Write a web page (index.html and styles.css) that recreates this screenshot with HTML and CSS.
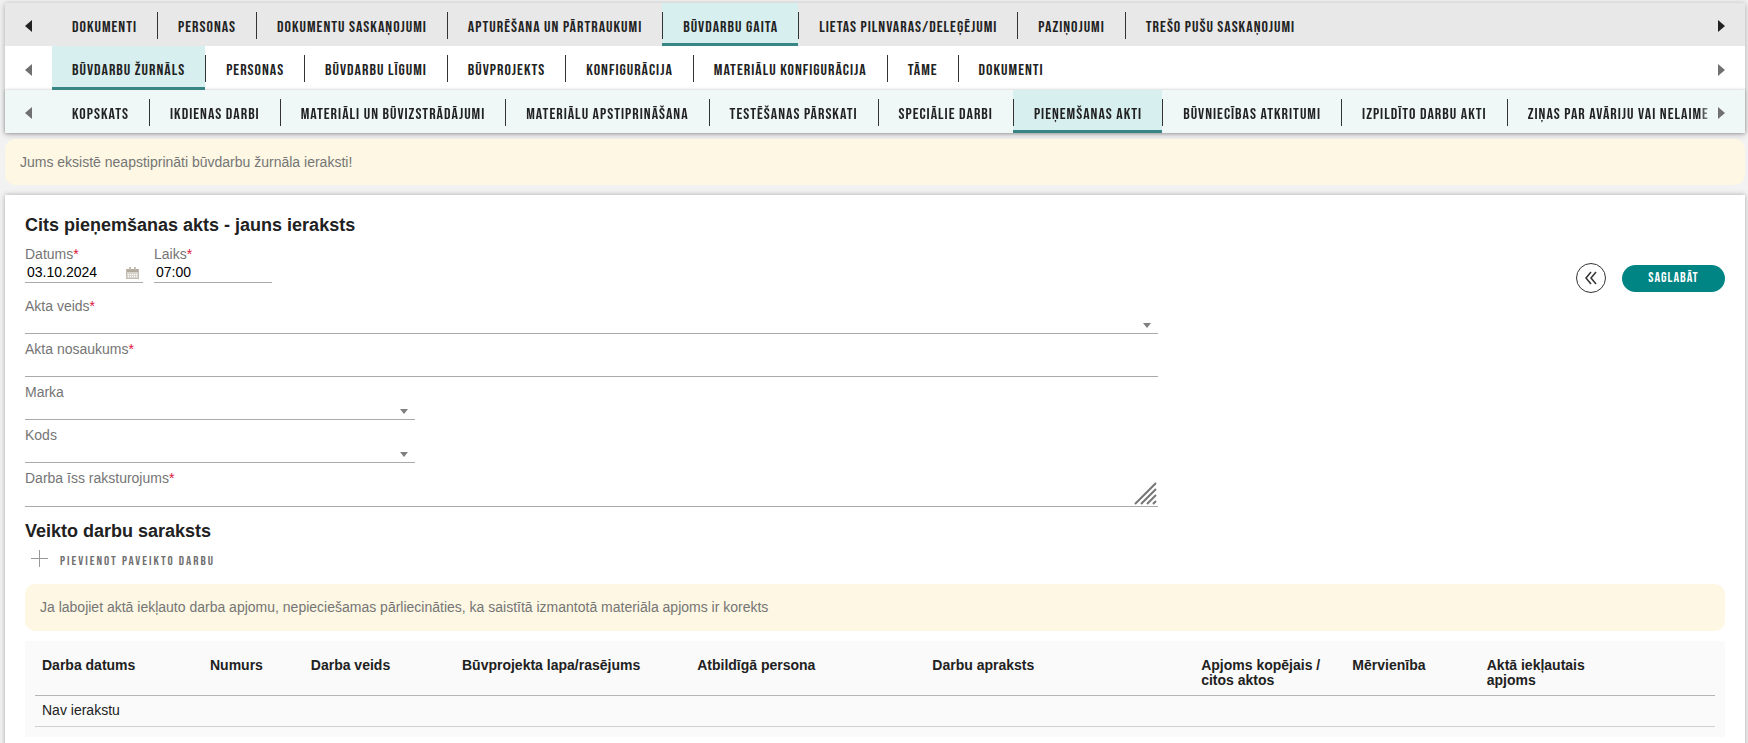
FILE: index.html
```html
<!DOCTYPE html>
<html lang="lv">
<head>
<meta charset="utf-8">
<meta name="viewport" content="width=device-width, initial-scale=1">
<title>Cits pieņemšanas akts</title>
<link rel="stylesheet" href="styles.css">
</head>
<body>
<div class="page">
  <header class="menus">
    <nav class="menu menu-primary" aria-label="Galvenā izvēlne">
      <button class="arrow" type="button" aria-label="Ritināt pa kreisi"><svg width="8" height="12" viewBox="0 0 8 12"><path d="M7 0v12L0 6z"/></svg></button>
      <div class="tabs">
        <a class="tab" href="#"><span>DOKUMENTI</span></a>
        <a class="tab" href="#"><span>PERSONAS</span></a>
        <a class="tab" href="#"><span>DOKUMENTU SASKAŅOJUMI</span></a>
        <a class="tab" href="#"><span>APTURĒŠANA UN PĀRTRAUKUMI</span></a>
        <a class="tab active" href="#"><span>BŪVDARBU GAITA</span></a>
        <a class="tab" href="#"><span>LIETAS PILNVARAS/DELEĢĒJUMI</span></a>
        <a class="tab" href="#"><span>PAZIŅOJUMI</span></a>
        <a class="tab" href="#"><span>TREŠO PUŠU SASKAŅOJUMI</span></a>
      </div>
      <button class="arrow arrow-next" type="button" aria-label="Ritināt pa labi"><svg width="8" height="12" viewBox="0 0 8 12"><path d="M1 0v12l7-6z"/></svg></button>
    </nav>
    <nav class="menu menu-secondary" aria-label="Būvdarbu gaita">
      <button class="arrow" type="button" aria-label="Ritināt pa kreisi"><svg width="8" height="12" viewBox="0 0 8 12"><path d="M7 0v12L0 6z"/></svg></button>
      <div class="tabs">
        <a class="tab active" href="#"><span>BŪVDARBU ŽURNĀLS</span></a>
        <a class="tab" href="#"><span>PERSONAS</span></a>
        <a class="tab" href="#"><span>BŪVDARBU LĪGUMI</span></a>
        <a class="tab" href="#"><span>BŪVPROJEKTS</span></a>
        <a class="tab" href="#"><span>KONFIGURĀCIJA</span></a>
        <a class="tab" href="#"><span>MATERIĀLU KONFIGURĀCIJA</span></a>
        <a class="tab" href="#"><span>TĀME</span></a>
        <a class="tab" href="#"><span>DOKUMENTI</span></a>
      </div>
      <button class="arrow arrow-next" type="button" aria-label="Ritināt pa labi"><svg width="8" height="12" viewBox="0 0 8 12"><path d="M1 0v12l7-6z"/></svg></button>
    </nav>
    <nav class="menu menu-tertiary" aria-label="Būvdarbu žurnāls">
      <button class="arrow" type="button" aria-label="Ritināt pa kreisi"><svg width="8" height="12" viewBox="0 0 8 12"><path d="M7 0v12L0 6z"/></svg></button>
      <div class="tabs faded">
        <a class="tab" href="#"><span>KOPSKATS</span></a>
        <a class="tab" href="#"><span>IKDIENAS DARBI</span></a>
        <a class="tab" href="#"><span>MATERIĀLI UN BŪVIZSTRĀDĀJUMI</span></a>
        <a class="tab" href="#"><span>MATERIĀLU APSTIPRINĀŠANA</span></a>
        <a class="tab" href="#"><span>TESTĒŠANAS PĀRSKATI</span></a>
        <a class="tab" href="#"><span>SPECIĀLIE DARBI</span></a>
        <a class="tab active" href="#"><span>PIEŅEMŠANAS AKTI</span></a>
        <a class="tab" href="#"><span>BŪVNIECĪBAS ATKRITUMI</span></a>
        <a class="tab" href="#"><span>IZPILDĪTO DARBU AKTI</span></a>
        <a class="tab" href="#"><span>ZIŅAS PAR AVĀRIJU VAI NELAIME</span></a>
      </div>
      <button class="arrow arrow-next" type="button" aria-label="Ritināt pa labi"><svg width="8" height="12" viewBox="0 0 8 12"><path d="M1 0v12l7-6z"/></svg></button>
    </nav>
  </header>

  <p class="notice">Jums eksistē neapstiprināti būvdarbu žurnāla ieraksti!</p>

  <main class="card">
    <h1 class="title">Cits pieņemšanas akts - jauns ieraksts</h1>
    <form class="form">
      <div class="fields">
        <div class="pair">
          <div class="field">
            <label for="date">Datums<span class="req">*</span></label>
            <div class="control">
              <input id="date" type="text" value="03.10.2024">
              <svg class="calendar" width="13" height="14" viewBox="0 0 13 14"><path fill="#d8d3cb" d="M1 4h11v9H1z"/><path fill="#b3aa9e" d="M1 3h2v1h2V3h3v1h2V3h2v3H1z"/><path fill="#c4bdb3" d="M0 3h1v10H0zM12 3h1v10h-1zM0 12h13v1H0zM3 1h2v3H3zM8 1h2v3H8z"/><path stroke="#fff" stroke-dasharray="1 1" d="M2 8.500h9M2 10.500h9"/></svg>
            </div>
          </div>
          <div class="field">
            <label for="time">Laiks<span class="req">*</span></label>
            <div class="control"><input id="time" type="text" value="07:00"></div>
          </div>
        </div>
        <div class="field">
          <label for="kind">Akta veids<span class="req">*</span></label>
          <div class="control"><select id="kind"><option></option></select><svg class="caret" width="8" height="5" viewBox="0 0 8 5"><path d="M0 0h8L4 5z"/></svg></div>
        </div>
        <div class="field">
          <label for="name">Akta nosaukums<span class="req">*</span></label>
          <div class="control"><input id="name" type="text"></div>
        </div>
        <div class="field short">
          <label for="mark">Marka</label>
          <div class="control"><select id="mark"><option></option></select><svg class="caret" width="8" height="5" viewBox="0 0 8 5"><path d="M0 0h8L4 5z"/></svg></div>
        </div>
        <div class="field short">
          <label for="code">Kods</label>
          <div class="control"><select id="code"><option></option></select><svg class="caret" width="8" height="5" viewBox="0 0 8 5"><path d="M0 0h8L4 5z"/></svg></div>
        </div>
        <div class="field">
          <label for="summary">Darba īss raksturojums<span class="req">*</span></label>
          <div class="control"><textarea id="summary" rows="1"></textarea><svg class="grip" width="24" height="23" viewBox="0 0 24 23"><path d="M2 22 23 1M8 22 23 7M14 22l9-9M20 22l3-3"/></svg></div>
        </div>
      </div>
      <div class="actions">
        <button class="back" type="button" aria-label="Atpakaļ"><svg width="12" height="14" viewBox="0 0 12 14"><path d="M6 1 1 7l5 6M11 1 6 7l5 6"/></svg></button>
        <button class="save" type="submit">SAGLABĀT</button>
      </div>
    </form>

    <h2 class="title subtitle">Veikto darbu saraksts</h2>
    <button class="add" type="button"><svg width="17" height="17" viewBox="0 0 17 17"><path d="M8.500 0v17M0 8.500h17"/></svg><span>PIEVIENOT PAVEIKTO DARBU</span></button>
    <p class="notice notice-inner">Ja labojiet aktā iekļauto darba apjomu, nepieciešamas pārliecināties, ka saistītā izmantotā materiāla apjoms ir korekts</p>

    <div class="table-box">
      <table class="works">
        <colgroup><col class="c10"><col class="c6"><col class="c9"><col class="c14"><col class="c14"><col class="c16"><col class="c9"><col class="c8"><col></colgroup>
        <thead>
          <tr><th>Darba datums</th><th>Numurs</th><th>Darba veids</th><th>Būvprojekta lapa/rasējums</th><th>Atbildīgā persona</th><th>Darbu apraksts</th><th>Apjoms kopējais / citos aktos</th><th>Mērvienība</th><th>Aktā iekļautais<br>apjoms</th></tr>
        </thead>
        <tbody><tr><td colspan="9">Nav ierakstu</td></tr></tbody>
      </table>
    </div>
  </main>
</div>
</body>
</html>
```
FILE: styles.css
```css
* { box-sizing: border-box; }

body {
  --caps-font: "Bebas Neue", "Roboto Condensed", Roboto, sans-serif;
  margin: 0;
  background: #f2f2f2;
  color: #212121;
  font: 14px/16px "Liberation Sans", Arial, sans-serif;
  overflow: hidden;
}

button, input, select, textarea { font: inherit; }

button {
  padding: 0;
  border: 0;
  background: none;
  cursor: pointer;
}

.page { padding: 3px 3px 0 5px; }

.menus { box-shadow: 0 1px 6px rgba(0, 0, 0, 0.3); }

.menu {
  display: flex;
  height: 43px;
  fill: #707070;
}

.menu-primary { background: #e8e8e8; fill: #222; }
.menu-secondary { height: 44px; background: #fff; }
.menu-tertiary { background: #eff7f7; box-shadow: 0 0 3px rgba(0, 0, 0, 0.25); }

.arrow {
  flex: none;
  display: flex;
  align-items: center;
  justify-content: center;
  width: 47px;
  padding-top: 3px;
  fill: inherit;
}

.arrow-next {
  justify-content: flex-start;
  width: 28px;
}

.tabs {
  flex: 1;
  min-width: 0;
  display: flex;
  overflow: hidden;
}

.faded {
  -webkit-mask-image: linear-gradient(to left, transparent, #000 18px);
  mask-image: linear-gradient(to left, transparent, #000 18px);
}

.tab {
  flex: none;
  padding-top: 9px;
  border-bottom: 3px solid transparent;
  color: #222;
  font: 16px/23px var(--caps-font);
  letter-spacing: 1px;
  text-decoration: none;
  white-space: nowrap;
}

.tab span {
  display: block;
  padding: 4px 20px 0;
}

.tab + .tab span { border-left: 1px solid #333; }

.active {
  background: #d8efef;
  border-bottom-color: #398484;
}

.notice {
  margin: 6px 0 0;
  padding: 15px;
  border-radius: 10px;
  background: #fdf7e3;
  color: #757575;
}

.card {
  margin-top: 10px;
  padding: 18px 20px 20px;
  background: #fff;
  box-shadow: 0 0 5px rgba(0, 0, 0, 0.3);
}

.title {
  margin: 0;
  font-size: 18px;
  line-height: 24px;
}

.form {
  display: grid;
  grid-template-columns: 2fr 1fr;
  margin-top: 9px;
}

.fields { display: grid; gap: 7px; }

.pair {
  display: flex;
  gap: 11px;
  margin-bottom: 8px;
}

.pair .field { width: 118px; }
.short { width: 390px; }

.field label {
  display: block;
  color: #757575;
}

.req { color: #dc143c; }

.control { position: relative; }

.control input, .control select, .control textarea {
  display: block;
  width: 100%;
  height: 20px;
  padding: 0 2px;
  border: 0;
  border-bottom: 1px solid #aaa;
  border-radius: 0;
  background: none;
  color: #000;
  outline: 0;
  appearance: none;
  resize: none;
}

.pair .control input, .control textarea { height: 21px; }

.calendar {
  position: absolute;
  right: 4px;
  top: 4px;
}

.caret {
  position: absolute;
  right: 7px;
  bottom: 6px;
  fill: #808080;
  pointer-events: none;
}

.grip {
  position: absolute;
  right: 1px;
  bottom: 2px;
  fill: none;
  stroke: #757575;
  stroke-width: 2;
}

.actions {
  display: flex;
  align-items: center;
  justify-content: flex-end;
  align-self: start;
  gap: 16px;
  padding-top: 17px;
}

.back {
  display: flex;
  align-items: center;
  justify-content: center;
  width: 30px;
  height: 30px;
  border: 1px solid #333;
  border-radius: 50%;
}

.back svg { fill: none; stroke: #333; stroke-width: 1.5; }

.save {
  width: 103px;
  height: 27px;
  padding-bottom: 2px;
  border-radius: 14px;
  background: #008484;
  color: #fff;
  font: 14px/25px var(--caps-font);
  letter-spacing: 1px;
}

.subtitle { margin-top: 12px; }

.add {
  display: flex;
  align-items: center;
  gap: 12px;
  height: 20px;
  margin: 5px 0 0 6px;
  color: #707070;
  font: 13px/18px var(--caps-font);
  letter-spacing: 2px;
}

.add span { padding-top: 5px; }
.add svg { stroke: #999; }

.notice-inner {
  margin-top: 16px;
  padding-bottom: 16px;
}

.table-box {
  margin-top: 10px;
  padding: 0 10px 10px;
  background: #fafafa;
}

.works {
  width: 100%;
  table-layout: fixed;
  border-collapse: separate;
  border-spacing: 0;
}

.c6 { width: 6%; }
.c8 { width: 8%; }
.c9 { width: 9%; }
.c10 { width: 10%; }
.c14 { width: 14%; }
.c16 { width: 16%; }

.works th {
  padding: 17px 7px 7px;
  border-bottom: 1px solid #b5b5b5;
  line-height: 15px;
  text-align: left;
  vertical-align: top;
}

.works td {
  padding: 6px 7px 8px;
  border-bottom: 1px solid #d0d0d0;
}
```
